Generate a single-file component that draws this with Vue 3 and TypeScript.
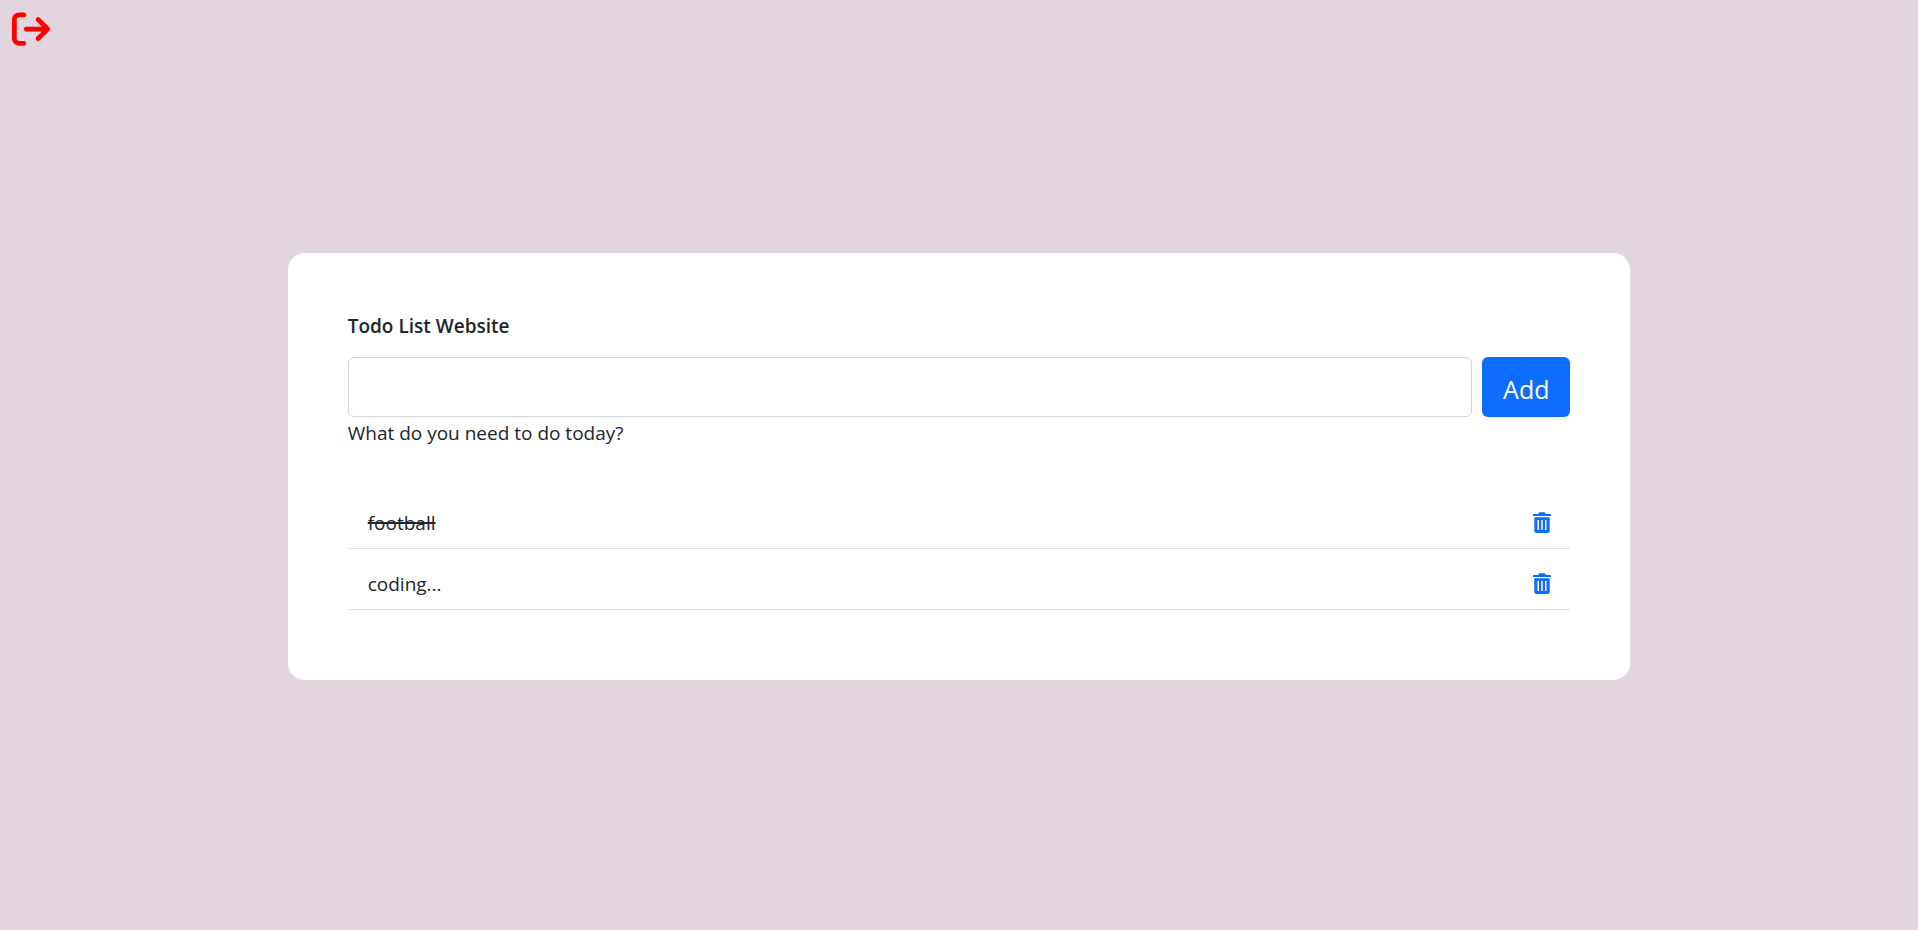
<script setup lang="ts">
import { ref } from 'vue'

interface Todo {
  id: number
  text: string
  done: boolean
}

const draft = ref('')
const todos = ref<Todo[]>([
  { id: 1, text: 'football', done: true },
  { id: 2, text: 'coding...', done: false },
])

function addTodo(): void {
  const text = draft.value.trim()
  if (!text) return
  todos.value.push({ id: Date.now(), text, done: false })
  draft.value = ''
}

function removeTodo(id: number): void {
  todos.value = todos.value.filter((todo) => todo.id !== id)
}
</script>

<template>
  <div class="page">
    <button class="logout" type="button" aria-label="Log out">
      <svg viewBox="0 0 512 512" aria-hidden="true">
        <path d="M502.6 278.6c12.5-12.5 12.5-32.8 0-45.3l-128-128c-12.5-12.5-32.8-12.5-45.3 0s-12.5 32.8 0 45.3L402.7 224 192 224c-17.7 0-32 14.3-32 32s14.3 32 32 32l210.7 0-73.4 73.4c-12.5 12.5-12.5 32.8 0 45.3s32.8 12.5 45.3 0l128-128zM160 96c17.7 0 32-14.3 32-32s-14.3-32-32-32L96 32C43 32 0 75 0 128L0 384c0 53 43 96 96 96l64 0c17.7 0 32-14.3 32-32s-14.3-32-32-32l-64 0c-17.7 0-32-14.3-32-32l0-256c0-17.7 14.3-32 32-32l64 0z" />
      </svg>
    </button>

    <main class="card">
      <form @submit.prevent="addTodo">
        <label class="title" for="todo-input">Todo List Website</label>
        <div class="entry">
          <input id="todo-input" v-model="draft" type="text" aria-describedby="todo-help" />
          <button class="add" type="submit">Add</button>
        </div>
        <div id="todo-help" class="help">What do you need to do today?</div>
      </form>

      <ul class="list">
        <li v-for="todo in todos" :key="todo.id" class="item">
          <span :class="{ done: todo.done }" @click="todo.done = !todo.done">{{ todo.text }}</span>
          <button class="remove" type="button" :aria-label="`Delete ${todo.text}`" @click="removeTodo(todo.id)">
            <svg viewBox="0 0 18 22" aria-hidden="true">
              <path fill-rule="evenodd" d="M5 2 5.7 .9Q6.1 .3 6.8 .3H11.2Q11.9 .3 12.3 .9L13 2H17.4Q18 2 18 2.6V4H0V2.6Q0 2 .6 2ZM1.3 5.2H16.7V19Q16.7 21 14.7 21H3.3Q1.3 21 1.3 19ZM4.5 8V18H6V8ZM8.25 8V18H9.75V8ZM12 8V18H13.5V8Z" />
            </svg>
          </button>
        </li>
      </ul>
    </main>
  </div>
</template>

<style>
body {
  margin: 0;
  background: #e2d5de;
}
</style>

<style scoped>
.page {
  box-sizing: border-box;
  min-height: 100vh;
  padding-top: 3px;
  display: flex;
  align-items: center;
  justify-content: center;
  color: #212529;
  font: 19px/30px "Open Sans", "Noto Sans", sans-serif;
}

button {
  font: inherit;
  cursor: pointer;
}

.logout {
  position: absolute;
  top: 10px;
  left: 12px;
  padding: 0;
  border: 0;
  background: none;
}

.logout svg {
  display: block;
  width: 38px;
  height: 38px;
  fill: #f00;
}

.card {
  box-sizing: border-box;
  width: calc(70% + 2px);
  padding: 58px 60px 70px;
  border: 1px solid #e0dde0;
  border-radius: 18px;
  background: #fff;
}

.title {
  display: block;
  margin-bottom: 16px;
  font-weight: 600;
}

.entry {
  display: flex;
  gap: 10px;
}

.help {
  margin-top: 1px;
}

input {
  box-sizing: border-box;
  flex: 1;
  min-width: 0;
  height: 60px;
  padding: 8px 16px;
  border: 1px solid #ced4da;
  border-radius: 6px;
  color: inherit;
  font: inherit;
}

.add {
  width: 88px;
  padding: 3px 0 0;
  border: 0;
  border-radius: 6px;
  background: #0d6efd;
  color: #fff;
  font-size: 25px;
}

.list {
  margin: 40px 0 0;
  padding: 0;
  list-style: none;
}

.item {
  box-sizing: border-box;
  height: 61px;
  padding: 10px 19px 0 20px;
  display: flex;
  align-items: center;
  justify-content: space-between;
  border-bottom: 1px solid #dee2e6;
}

.done {
  text-decoration: line-through 2px;
}

.remove {
  padding: 0;
  border: 0;
  background: none;
}

.remove svg {
  display: block;
  width: 18px;
  height: 22px;
  fill: #0d6efd;
}
</style>
